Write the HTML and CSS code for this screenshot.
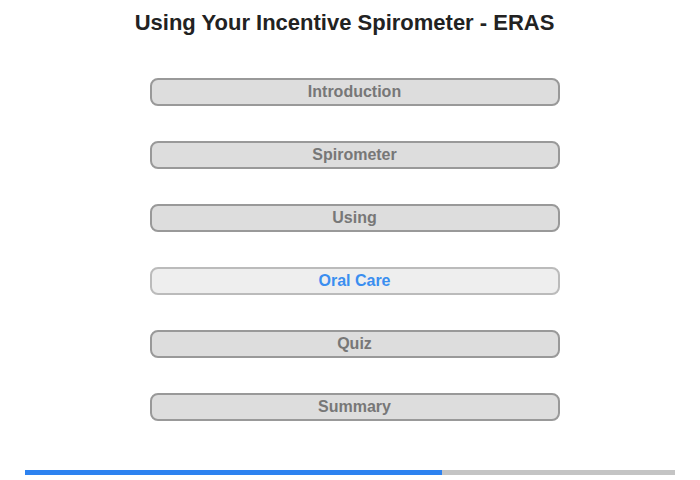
FILE: index.html
```html
<!DOCTYPE html>
<html lang="en">
<head>
  <meta charset="UTF-8" />
  <meta name="viewport" content="width=device-width, initial-scale=1.0" />
  <title>Using Your Incentive Spirometer - ERAS</title>
  <link rel="stylesheet" href="styles.css">
</head>
<body>
  <h1>Using Your Incentive Spirometer - ERAS</h1>
  <nav class="menu">
    <button type="button" class="menu-item">Introduction</button>
    <button type="button" class="menu-item">Spirometer</button>
    <button type="button" class="menu-item">Using</button>
    <button type="button" class="menu-item current">Oral Care</button>
    <button type="button" class="menu-item">Quiz</button>
    <button type="button" class="menu-item">Summary</button>
  </nav>
  <div class="progress">
    <div class="progress-fill" style="width: 64.2%"></div>
  </div>
</body>
</html>
```

FILE: styles.css
```css
body { font-family: "Liberation Sans", Arial, sans-serif; margin: 0; padding: 10px 25px 0; background: #fff; }
h1 { font-size: 22px; text-align: center; color: #222; margin: 0 0 0 -11px; line-height: 25px; }
.menu { display: flex; flex-direction: column; align-items: center; gap: 35px; margin: 43px 0 0 9px; }
.menu-item { width: 410px; height: 28px; border: 2px solid #999; border-radius: 8px; background: #ddd; color: #777; font: bold 16px "Liberation Sans", Arial, sans-serif; padding: 0; cursor: pointer; }
.menu-item.current { background: #eee; border-color: #bbb; color: #3b8ef0; }
.progress { height: 5px; background: #c4c4c4; margin-top: 49px; }
.progress-fill { height: 100%; background: #2d82f0; }
```
